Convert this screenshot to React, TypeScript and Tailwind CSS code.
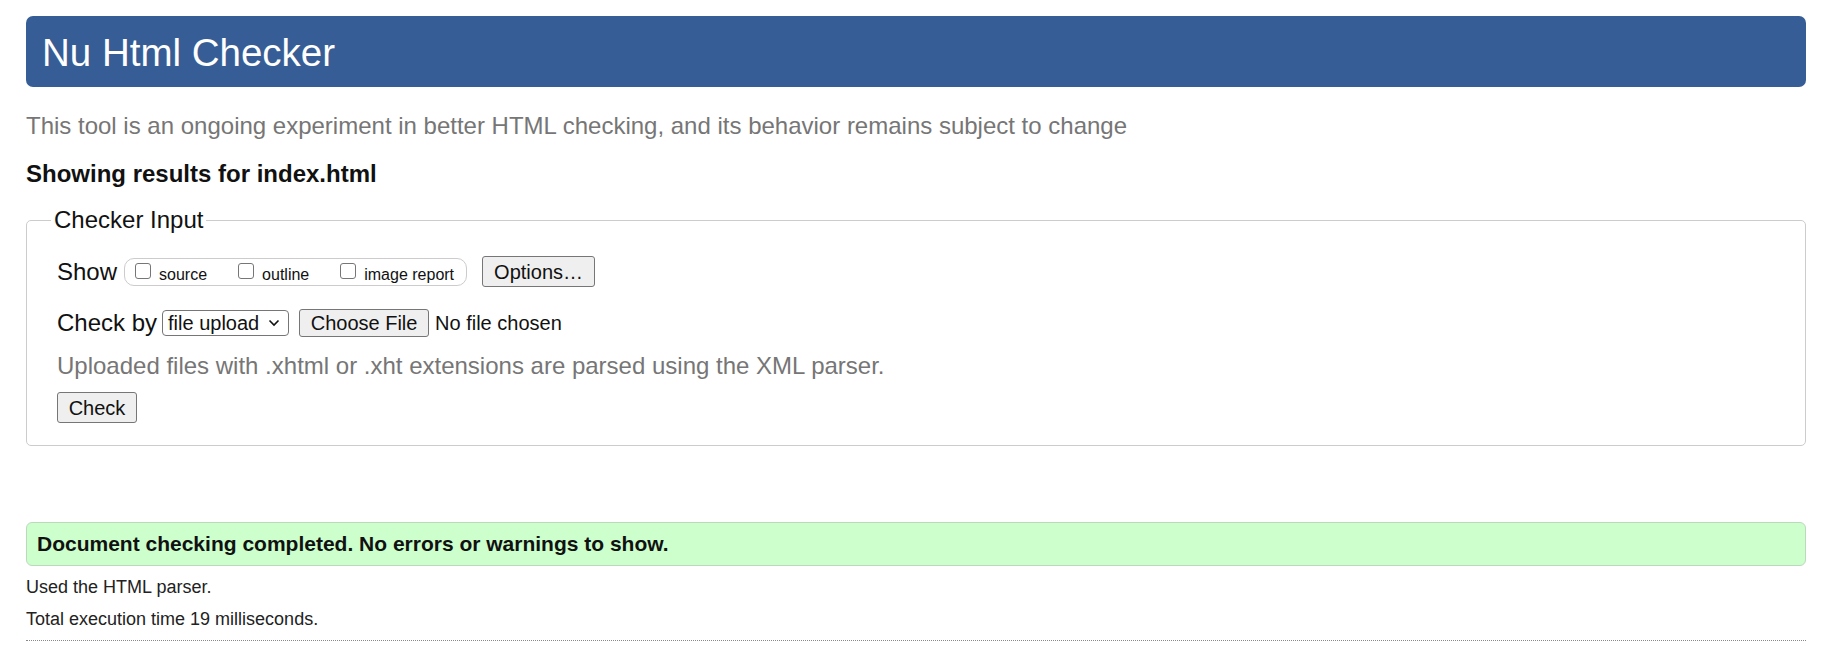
import React from 'react';

const Box = ({ label }: { label: string }) => (
    <label className="flex items-center">
        <span className="w-[16px] h-[16px] border border-[#767676] rounded-[3px] bg-white mr-[8px] mt-[-2px]"></span>
        <span className="text-[16px] leading-[20px] mt-[6px]">{label}</span>
    </label>
);

const NativeButton = ({ children, className = '' }: { children: React.ReactNode; className?: string }) => (
    <button className={`bg-[#efefef] border border-[#767676] rounded-[3px] text-[20px] leading-[24px] text-[#111] ${className}`}>
        {children}
    </button>
);

export default function App() {
    return (
        <div className="min-h-screen bg-white px-[26px] pt-[16px] text-[#111]" style={{ fontFamily: '"Liberation Sans", Arial, sans-serif' }}>
            <header className="h-[71px] bg-[#365d95] rounded-[7px] flex items-center pl-[16px]">
                <h1 className="text-white text-[38.5px] leading-[44px] mt-[2px]">Nu Html Checker</h1>
            </header>

            <p className="mt-[25px] text-[24px] leading-[28px] text-[#767676]">
                This tool is an ongoing experiment in better HTML checking, and its behavior remains subject to change
            </p>

            <p className="mt-[20px] text-[24px] leading-[28px] font-bold">Showing results for index.html</p>

            <fieldset className="mt-[18px] border border-[#ccc] rounded-[5px] pl-[24px] pb-[22px]">
                <legend className="px-[3px] text-[24px] leading-[28px]">Checker Input</legend>

                <div className="ml-[6px] mt-[22px] flex items-center h-[31px]">
                    <span className="text-[24px] leading-[28px] mr-[7px]">Show</span>
                    <div className="h-[28px] border border-[#ccc] rounded-[10px] flex items-center pl-[10px] pr-[12px] gap-[31px]">
                        <Box label="source" />
                        <Box label="outline" />
                        <Box label="image report" />
                    </div>
                    <NativeButton className="ml-[15px] h-[31px] w-[113px]">Options…</NativeButton>
                </div>

                <div className="ml-[6px] mt-[20px] flex items-center h-[31px]">
                    <span className="text-[24px] leading-[28px] mr-[5px]">Check by</span>
                    <div className="h-[26px] w-[127px] border border-[#767676] rounded-[4px] flex items-center pl-[5px] pr-[8px]">
                        <span className="text-[20px] leading-[24px]">file upload</span>
                        <svg width="12" height="8" viewBox="0 0 12 8" className="ml-auto">
                            <path d="M1.5 1.5 L6 6 L10.5 1.5" fill="none" stroke="#111" strokeWidth="1.6" />
                        </svg>
                    </div>
                    <NativeButton className="ml-[10px] h-[28px] w-[130px]">Choose File</NativeButton>
                    <span className="text-[20px] leading-[24px] ml-[6px]">No file chosen</span>
                </div>

                <p className="ml-[6px] mt-[14px] text-[24px] leading-[28px] text-[#767676]">
                    Uploaded files with .xhtml or .xht extensions are parsed using the XML parser.
                </p>

                <div className="ml-[6px] mt-[12px] flex">
                    <NativeButton className="h-[31px] w-[80px]">Check</NativeButton>
                </div>
            </fieldset>

            <div className="mt-[76px] h-[44px] bg-[#ccffcc] border border-[#bdd9bd] rounded-[6px] flex items-center pl-[10px]">
                <span className="text-[21px] leading-[24px] font-bold">Document checking completed. No errors or warnings to show.</span>
            </div>

            <p className="mt-[10px] text-[18px] leading-[22px] text-[#222]">Used the HTML parser.</p>
            <p className="mt-[10px] text-[18px] leading-[22px] text-[#222]">Total execution time 19 milliseconds.</p>

            <div className="mt-[10px] border-t border-dotted border-[#888]"></div>
        </div>
    );
}
